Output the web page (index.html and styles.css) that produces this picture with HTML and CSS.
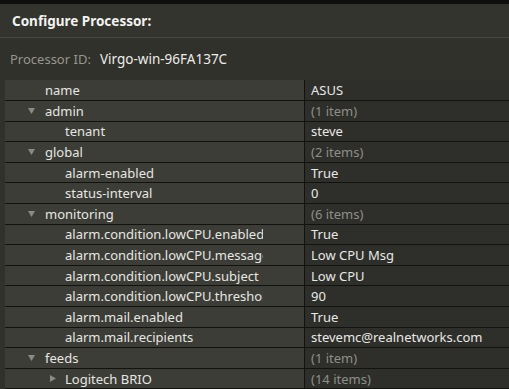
FILE: index.html
```html
<!DOCTYPE html>
<html>
<head>
<meta charset="utf-8">
<link rel="stylesheet" href="styles.css">
</head>
<body>
<div class="topbar"></div>
<div class="header">Configure Processor:</div>
<div class="meta"><span class="meta-label">Processor ID:</span><span class="meta-value">Virgo-win-96FA137C</span></div>
<div class="grid">
  <div class="row"><div class="k"><div class="kt l1"><span class="tw"></span>name</div></div><div class="v">ASUS</div></div>
  <div class="row"><div class="k"><div class="kt l1"><span class="tw"><svg width="7" height="6" viewBox="0 0 7 6"><path d="M0 0H7L3.5 6Z" fill="#8a8a86"/></svg></span>admin</div></div><div class="v dim">(1 item)</div></div>
  <div class="row"><div class="k"><div class="kt l2"><span class="tw"></span>tenant</div></div><div class="v">steve</div></div>
  <div class="row"><div class="k"><div class="kt l1"><span class="tw"><svg width="7" height="6" viewBox="0 0 7 6"><path d="M0 0H7L3.5 6Z" fill="#8a8a86"/></svg></span>global</div></div><div class="v dim">(2 items)</div></div>
  <div class="row"><div class="k"><div class="kt l2"><span class="tw"></span>alarm-enabled</div></div><div class="v">True</div></div>
  <div class="row"><div class="k"><div class="kt l2"><span class="tw"></span>status-interval</div></div><div class="v">0</div></div>
  <div class="row"><div class="k"><div class="kt l1"><span class="tw"><svg width="7" height="6" viewBox="0 0 7 6"><path d="M0 0H7L3.5 6Z" fill="#8a8a86"/></svg></span>monitoring</div></div><div class="v dim">(6 items)</div></div>
  <div class="row"><div class="k"><div class="kt l2"><span class="tw"></span>alarm.condition.lowCPU.enabled</div></div><div class="v">True</div></div>
  <div class="row"><div class="k"><div class="kt l2"><span class="tw"></span>alarm.condition.lowCPU.message</div></div><div class="v">Low CPU Msg</div></div>
  <div class="row"><div class="k"><div class="kt l2"><span class="tw"></span>alarm.condition.lowCPU.subject</div></div><div class="v">Low CPU</div></div>
  <div class="row"><div class="k"><div class="kt l2"><span class="tw"></span>alarm.condition.lowCPU.threshold</div></div><div class="v">90</div></div>
  <div class="row"><div class="k"><div class="kt l2"><span class="tw"></span>alarm.mail.enabled</div></div><div class="v">True</div></div>
  <div class="row"><div class="k"><div class="kt l2"><span class="tw"></span>alarm.mail.recipients</div></div><div class="v">stevemc@realnetworks.com</div></div>
  <div class="row"><div class="k"><div class="kt l1"><span class="tw"><svg width="7" height="6" viewBox="0 0 7 6"><path d="M0 0H7L3.5 6Z" fill="#8a8a86"/></svg></span>feeds</div></div><div class="v dim">(1 item)</div></div>
  <div class="row"><div class="k"><div class="kt l2"><span class="tw tw2"><svg width="6" height="7" viewBox="0 0 6 7"><path d="M0 0V7L6 3.5Z" fill="#8a8a86"/></svg></span>Logitech BRIO</div></div><div class="v dim">(14 items)</div></div>
</div>
</body>
</html>
```
FILE: styles.css
```css
* { box-sizing: border-box; }
html, body { margin: 0; padding: 0; }
body {
  background: #30312b;
  font-family: "Noto Sans", "Open Sans", sans-serif;
  font-size: 13px;
  color: #e8e8e6;
  width: 509px;
  height: 389px;
  overflow: hidden;
}
.topbar { height: 4px; background: #0f0f0e; }
.header {
  height: 34px;
  background: #33342e;
  border-bottom: 1px solid #484942;
  display: flex;
  align-items: center;
  padding-left: 12px;
  font-weight: bold;
  font-size: 13.5px;
  color: #f2f2f0;
}
.meta {
  height: 42px;
  display: flex;
  align-items: center;
  padding-left: 10px;
  padding-bottom: 1px;
}
.meta-label { color: #96968f; width: 90px; font-size: 13px; }
.meta-value { color: #ececea; font-size: 13.5px; }
.grid { margin-left: 5px; padding-top: 0.4px; }
.row {
  display: flex;
  height: 20.6px;
  border-bottom: 1px solid #121210;
}
.k {
  width: 300px;
  flex: none;
  background: #3c3d36;
  border-right: 1px solid #121210;
  display: flex;
  align-items: center;
}
.kt {
  width: 258px;
  overflow: hidden;
  white-space: nowrap;
  display: flex;
  align-items: center;
  color: #e6e6e3;
}
.kt.l1 { padding-left: 23px; }
.kt.l2 { padding-left: 43px; }
.tw { width: 17px; flex: none; display: flex; align-items: center; }
.tw2 { padding-left: 2px; }
.v {
  flex: 1;
  background: #2e2f2a;
  padding-left: 6px;
  display: flex;
  align-items: center;
  white-space: nowrap;
}
.dim { color: #8e8e89; }
```
